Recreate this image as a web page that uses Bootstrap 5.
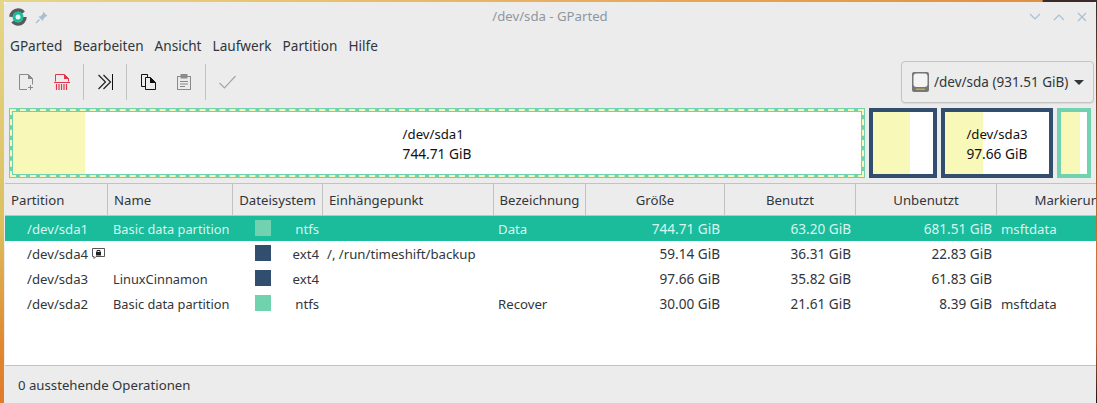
<!DOCTYPE html>
<html lang="de">
<head>
  <meta charset="UTF-8" />
  <title>/dev/sda - GParted</title>
  <link href="https://cdn.jsdelivr.net/npm/bootstrap@5.3.3/dist/css/bootstrap.min.css" rel="stylesheet" />
  <style>
    html, body { height: 100%; overflow: hidden; }
    body {
      font-family: "Noto Sans", sans-serif;
      font-size: 13.2px;
      color: #31363b;
      background:
        linear-gradient(90deg, #e6d688 0, #e8c070 30%, #e6a050 70%, #e09040 95%, #3a2a28 95.1%) top/100% 2px no-repeat,
        linear-gradient(180deg, #e6d688 0, #dcc060 55%, #e08a30 85%, #e07a2c 100%) left/4px 100% no-repeat,
        linear-gradient(180deg, #3a2a28 0, #d0703c 60%, #c06040 85%, #201010 100%) right/1px 100% no-repeat;
      padding: 2px 1px 0 4px;
    }
    .gp-window { height: 401px; background: #ececec; border-radius: 4px 4px 0 0; }
    .gp-title { height: 30px; padding: 0 9px 0 5px; color: #8f979e; }
    .gp-title-text { left: 0; right: 0; top: 5px; }
    .gp-wm { column-gap: 12px; }
    .gp-menu { height: 28px; padding-left: 6px; gap: 11px; font-size: 13.6px; }
    .gp-toolbar { height: 44px; padding-left: 4px; padding-right: 2px; }
    .gp-tool { width: 36px; height: 36px; }
    .gp-sep { width: 1px; height: 36px; background: #c2c2c2; margin: 0 3px; }
    .gp-drive {
      height: 42px; width: 193px; background: #ececec; border: 1px solid #c4c4c4;
      border-radius: 4px; color: #31363b; font-size: 13.5px; padding: 0 9px 0 10px;
      box-shadow: 0 1px 1px rgba(0,0,0,.08);
    }
    .gp-drivetext { margin-left: 5px; }
    .gp-caret { border-left: 5px solid transparent; border-right: 5px solid transparent; border-top: 5px solid #31363b; }
    .gp-map { height: 70px; margin-top: 4px; padding-left: 5px; gap: 4px; color: #111; line-height: 19px; }
    .gp-part { background: #fff; border: 4px solid #324e6e; }
    .gp-fill { background: #f8f8b9; height: 100%; }
    .gp-label { left: 0; right: 0; top: 50%; margin-top: -18px; }
    .gp-labelnum { font-size: 13.7px; }
    .gp-sda1 {
      width: 856px; border-color: #70d2ae; outline: 2px dashed #f8f8b9; outline-offset: -3px;
    }
    .gp-sda1 .gp-fill { width: 72px; }
    .gp-sda4 { width: 68px; }
    .gp-sda4 .gp-fill { width: 37px; }
    .gp-sda3 { width: 112px; }
    .gp-sda3 .gp-fill { width: 38px; }
    .gp-sda2 { width: 34px; border-color: #70d2ae; }
    .gp-sda2 .gp-fill { width: 19px; }
    .gp-tablewrap { height: 183px; margin: 5px 0 0 1px; background: #fff; border-top: 1px solid #c2c2c2; border-bottom: 1px solid #c2c2c2; }
    .gp-table { table-layout: fixed; width: 1156px; max-width: none; margin: 0; color: #31363b; font-size: 13.2px; border-collapse: separate; border-spacing: 0; }
    .gp-table th, .gp-table td { padding: 0 5px; white-space: nowrap; overflow: hidden; border: 0; background: transparent; color: inherit; vertical-align: middle; line-height: 18px; }
    .gp-table th {
      height: 32px; font-weight: 400; background: #ececec; text-align: center;
      border-right: 1px solid #c2c2c2; border-bottom: 1px solid #c2c2c2;
    }
    .gp-table th:first-child, .gp-table th:nth-child(2), .gp-table th:nth-child(4) { text-align: left; padding-left: 6px; }
    .gp-table td { height: 25px; }
    .gp-table .gp-selected td { background: #1abc9c; color: #d8f5ee; }
    .gp-table td.gp-dev { padding-left: 22px; }
    .gp-table td.gp-name { font-size: 12.8px; }
    .gp-table td.gp-fs { padding: 0 4px 0 22px; text-align: right; }
    .gp-table td.gp-size { text-align: right; font-size: 13.6px; padding-right: 5px; }
    .gp-table td.gp-left { padding-left: 4px; }
    .gp-c1 { width: 103px; } .gp-c2 { width: 125px; } .gp-c3 { width: 90px; } .gp-c4 { width: 171px; }
    .gp-c5 { width: 92px; } .gp-c6 { width: 139px; } .gp-c7 { width: 131px; } .gp-c8 { width: 141px; } .gp-c9 { width: 164px; }
    .gp-swatch { width: 16px; height: 16px; left: 22px; top: 4px; }
    .gp-teal { background: #70d2ae; }
    .gp-navy { background: #324e6e; }
    .gp-status { height: 37px; padding: 3px 0 0 14px; }
    .gp-lock { vertical-align: 0; margin-left: 4px; }
  </style>
</head>
<body>
  <div class="gp-window d-flex flex-column">
    <div class="gp-title d-flex align-items-center position-relative">
      <svg width="18" height="18" viewBox="0 0 18 18"><circle cx="9" cy="9" r="7" fill="none" stroke="#5a5a5a" stroke-width="3.500" stroke-dasharray="17 5"/><circle cx="9" cy="9" r="5.500" fill="#1abc9c"/><circle cx="9" cy="9" r="2.500" fill="#eaf6f2"/></svg>
      <svg class="ms-2" width="13" height="13" viewBox="0 0 13 13"><path d="M8 .5l4.500 4.500-1.800.5-2.400 2.400-.3 2.300L3.300 5.500l2.300-.3L8 2.800z" fill="#a9bfd0"/><path d="M4.500 8.500L1 12" stroke="#a9bfd0" stroke-width="1.500"/></svg>
      <div class="gp-title-text position-absolute text-center">/dev/sda - GParted</div>
      <div class="gp-wm ms-auto d-flex align-items-center">
        <svg width="12" height="8" viewBox="0 0 12 8"><path d="M1 1l5 5 5-5" fill="none" stroke="#a9bfd0" stroke-width="1.200"/></svg>
        <svg width="12" height="8" viewBox="0 0 12 8"><path d="M1 7l5-5 5 5" fill="none" stroke="#a9bfd0" stroke-width="1.200"/></svg>
        <svg width="10" height="10" viewBox="0 0 10 10"><path d="M1 1l8 8M9 1l-8 8" fill="none" stroke="#a9bfd0" stroke-width="1.200"/></svg>
      </div>
    </div>
    <div class="gp-menu d-flex align-items-center">
      <span>GParted</span><span>Bearbeiten</span><span>Ansicht</span><span>Laufwerk</span><span>Partition</span><span>Hilfe</span>
    </div>
    <div class="gp-toolbar d-flex align-items-center">
      <div class="gp-tool d-flex align-items-center justify-content-center">
        <svg width="15" height="16" viewBox="0 0 15 16"><path d="M8 15.500H.5V.5h9l4 4v6" fill="none" stroke="#8a8a8a"/><path d="M9 0l5 5H9z" fill="#8a8a8a"/><path d="M11.500 11v5M9 13.500h5" stroke="#8a8a8a"/></svg>
      </div>
      <div class="gp-tool d-flex align-items-center justify-content-center">
        <svg width="16" height="16" viewBox="0 0 16 16"><path d="M1.500 7.500V.5h9l4 4v3" fill="none" stroke="#e0354a"/><path d="M10 0l5 5h-5z" fill="#e0354a"/><path d="M0 8.500h16" stroke="#e0354a"/><path d="M2.500 10v6M5 10v6M7.500 10v6M10 10v6M12.500 10v6" stroke="#e0354a" stroke-width="1.200"/></svg>
      </div>
      <div class="gp-sep"></div>
      <div class="gp-tool d-flex align-items-center justify-content-center">
        <svg width="15" height="16" viewBox="0 0 15 16"><path d="M.5 1l7 7-7 7M5.500 1l7 7-7 7" fill="none" stroke="#222" stroke-width="1.200"/><path d="M14.500 0v16" stroke="#111"/></svg>
      </div>
      <div class="gp-sep"></div>
      <div class="gp-tool d-flex align-items-center justify-content-center">
        <svg width="15" height="16" viewBox="0 0 15 16"><path d="M.5.500h6v12h-6z" fill="#ececec" stroke="#111"/><path d="M4.500 3.500h5l5 5v7h-10z" fill="#ececec" stroke="#111"/><path d="M9 3l6 6H9z" fill="#111"/></svg>
      </div>
      <div class="gp-tool d-flex align-items-center justify-content-center">
        <svg width="14" height="16" viewBox="0 0 14 16"><rect x=".5" y="2.500" width="13" height="13" fill="none" stroke="#8a8a8a"/><rect x="3.500" y="0" width="7" height="4.500" fill="#8a8a8a"/><path d="M3 7.500h8M3 10h8M3 12.500h5" stroke="#8a8a8a"/></svg>
      </div>
      <div class="gp-sep"></div>
      <div class="gp-tool d-flex align-items-center justify-content-center">
        <svg width="17" height="14" viewBox="0 0 17 14"><path d="M.5 8l5 5L16.500 1" fill="none" stroke="#a6a6a6" stroke-width="1.200"/></svg>
      </div>
      <button type="button" class="gp-drive btn d-flex align-items-center ms-auto">
        <svg width="17" height="20" viewBox="0 0 17 20"><rect width="17" height="20" rx="2" fill="#777"/><rect x="1.500" y="1.500" width="14" height="13.500" rx="3" fill="#f4f4f4"/><rect x="4" y="16.500" width="9" height="1.500" fill="#c9a24a"/></svg>
        <span class="gp-drivetext">/dev/sda (931.51 GiB)</span>
        <span class="gp-caret ms-auto"></span>
      </button>
    </div>
    <div class="gp-map d-flex">
      <div class="gp-part gp-sda1 position-relative"><div class="gp-fill"></div><div class="gp-label position-absolute d-flex justify-content-center"><div>/dev/sda1<br><span class="gp-labelnum">744.71 GiB</span></div></div></div>
      <div class="gp-part gp-sda4"><div class="gp-fill"></div></div>
      <div class="gp-part gp-sda3 position-relative"><div class="gp-fill"></div><div class="gp-label position-absolute d-flex justify-content-center"><div>/dev/sda3<br><span class="gp-labelnum">97.66 GiB</span></div></div></div>
      <div class="gp-part gp-sda2"><div class="gp-fill"></div></div>
    </div>
    <div class="gp-tablewrap overflow-hidden">
      <table class="table gp-table">
        <thead>
          <tr>
            <th class="gp-c1">Partition</th><th class="gp-c2">Name</th><th class="gp-c3">Dateisystem</th><th class="gp-c4">Einhängepunkt</th><th class="gp-c5">Bezeichnung</th><th class="gp-c6">Größe</th><th class="gp-c7">Benutzt</th><th class="gp-c8">Unbenutzt</th><th class="gp-c9">Markierungen</th>
          </tr>
        </thead>
        <tbody>
          <tr class="gp-selected">
            <td class="gp-dev">/dev/sda1</td><td class="gp-name">Basic data partition</td><td class="gp-fs position-relative"><span class="gp-swatch gp-teal position-absolute"></span>ntfs</td><td class="gp-left"></td><td class="gp-left">Data</td><td class="gp-size">744.71 GiB</td><td class="gp-size">63.20 GiB</td><td class="gp-size">681.51 GiB</td><td class="gp-left">msftdata</td>
          </tr>
          <tr>
            <td class="gp-dev">/dev/sda4<svg class="gp-lock" width="13" height="11" viewBox="0 0 13 11"><path d="M.5.500h12v8H4l-2 2v-2H.5z" fill="none" stroke="#555"/><rect x="4" y="4" width="5" height="3.500" fill="#222"/><path d="M5 4V2.500h3V4" fill="none" stroke="#222"/></svg></td><td class="gp-name"></td><td class="gp-fs position-relative"><span class="gp-swatch gp-navy position-absolute"></span>ext4</td><td class="gp-left">/, /run/timeshift/backup</td><td class="gp-left"></td><td class="gp-size">59.14 GiB</td><td class="gp-size">36.31 GiB</td><td class="gp-size">22.83 GiB</td><td class="gp-left"></td>
          </tr>
          <tr>
            <td class="gp-dev">/dev/sda3</td><td class="gp-name">LinuxCinnamon</td><td class="gp-fs position-relative"><span class="gp-swatch gp-navy position-absolute"></span>ext4</td><td class="gp-left"></td><td class="gp-left"></td><td class="gp-size">97.66 GiB</td><td class="gp-size">35.82 GiB</td><td class="gp-size">61.83 GiB</td><td class="gp-left"></td>
          </tr>
          <tr>
            <td class="gp-dev">/dev/sda2</td><td class="gp-name">Basic data partition</td><td class="gp-fs position-relative"><span class="gp-swatch gp-teal position-absolute"></span>ntfs</td><td class="gp-left"></td><td class="gp-left">Recover</td><td class="gp-size">30.00 GiB</td><td class="gp-size">21.61 GiB</td><td class="gp-size">8.39 GiB</td><td class="gp-left">msftdata</td>
          </tr>
        </tbody>
      </table>
    </div>
    <div class="gp-status d-flex align-items-center">0 ausstehende Operationen</div>
  </div>
  <script src="https://cdn.jsdelivr.net/npm/bootstrap@5.3.3/dist/js/bootstrap.bundle.min.js"></script>
</body>
</html>
